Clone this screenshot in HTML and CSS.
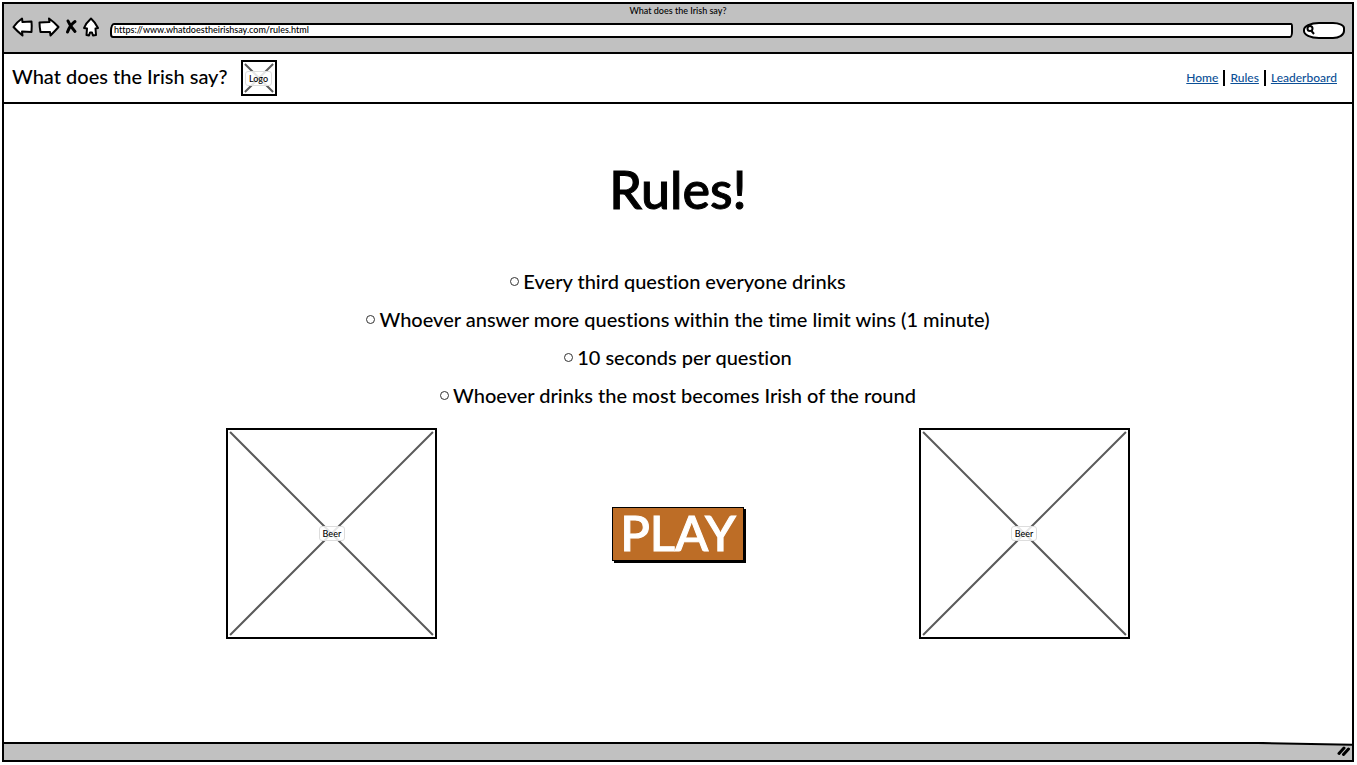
FILE: index.html
```html
<!DOCTYPE html>
<html lang="en">
<head>
<meta charset="utf-8">
<meta name="viewport" content="width=device-width, initial-scale=1">
<title>What does the Irish say?</title>
<link rel="stylesheet" href="styles.css">
</head>
<body>
<div class="window">
  <div class="chrome">
    <div class="chrome-title">What does the Irish say?</div>
    <div class="toolbar">
      <div class="tools">
        <button class="tool" type="button" aria-label="Back"><svg width="22" height="20" viewBox="0 0 22 20"><path d="M1.500 10Q5 5 10 1.500L10.500 5 19.500 4.500Q20 9 19.500 15L10 14.500 10.500 18.500Q5 14 1.500 10Z"/></svg></button>
        <button class="tool" type="button" aria-label="Forward"><svg width="22" height="20" viewBox="0 0 22 20"><path d="M1.500 5.500 11.500 5 11 1.500Q16 5 20.500 10 17 14 12.500 18.500L12 15 2.500 15Q1.500 10 1.500 5.500Z"/></svg></button>
        <button class="tool" type="button" aria-label="Stop"><svg width="14" height="20" viewBox="0 0 14 20"><path class="cross" d="M4 4Q6 9 11 14.500M11 4.500Q6 8 3.500 15"/></svg></button>
        <button class="tool" type="button" aria-label="Home page"><svg width="18" height="20" viewBox="0 0 18 20"><path d="M9 1.500Q13 5 16 11L13.500 11.500 14 18 11 18.500 10 15.500 8 15.500 7 18.500 4.500 18 5 11.500 2 11Q4 6 9 1.500Z"/></svg></button>
      </div>
      <input class="address" type="text" aria-label="Address" value="https://www.whatdoestheirishsay.com/rules.html">
      <div class="search">
        <svg width="9" height="10" viewBox="0 0 9 10"><circle cx="4" cy="3.500" r="2.500"/><path d="M5.500 6 8 9"/></svg>
        <input class="search-field" type="text" aria-label="Search">
      </div>
    </div>
  </div>

  <header class="site-header">
    <div class="brand">
      <span class="brand-name">What does the Irish say?</span>
      <div class="placeholder logo">
        <svg viewBox="0 0 100 100" preserveAspectRatio="none"><path d="M6 6 94 94M94 6 6 94"/></svg>
        <span class="placeholder-label">Logo</span>
      </div>
    </div>
    <nav class="site-nav">
      <a href="#">Home</a>
      <a href="#">Rules</a>
      <a href="#">Leaderboard</a>
    </nav>
  </header>

  <main class="content">
    <h1 class="heading">Rules!</h1>
    <ul class="rules">
      <li>Every third question everyone drinks</li>
      <li>Whoever answer more questions within the time limit wins (1 minute)</li>
      <li>10 seconds per question</li>
      <li>Whoever drinks the most becomes Irish of the round</li>
    </ul>
    <div class="play-row">
      <div class="placeholder beer">
        <svg viewBox="0 0 100 100" preserveAspectRatio="none"><path d="M1 1 99 99M99 1 1 99"/></svg>
        <span class="placeholder-label">Beer</span>
      </div>
      <button class="play" type="button">PLAY</button>
      <div class="placeholder beer">
        <svg viewBox="0 0 100 100" preserveAspectRatio="none"><path d="M1 1 99 99M99 1 1 99"/></svg>
        <span class="placeholder-label">Beer</span>
      </div>
    </div>
  </main>

  <footer class="status">
    <svg class="status-edge" viewBox="0 0 100 20" preserveAspectRatio="none"><path class="fill" d="M0 1 93 1 100 3V20H0Z"/><path class="line" d="M0 1 93 1 100 3"/></svg>
    <svg class="grip" width="13" height="10" viewBox="0 0 13 10"><path d="M2 7.500 7 2M6.500 8.500 11.500 3"/></svg>
  </footer>
</div>
</body>
</html>
```
FILE: styles.css
```css
*,
*::before {
  box-sizing: border-box;
}

body {
  margin: 0;
  padding: 2px 3px 3px 2px;
  min-height: 100vh;
  display: flex;
  background: #fff;
  color: #000;
  font-family: Lato, "Noto Sans", sans-serif;
  font-weight: 500;
  font-variant-ligatures: none;
}

button,
input {
  font: inherit;
  color: inherit;
}

.window {
  flex: 1;
  display: flex;
  flex-direction: column;
  border: 2px solid #000;
}

.chrome {
  height: 50px;
  background: #c1c1c1;
  border-bottom: 2px solid #000;
}

.chrome-title {
  font-size: 9px;
  line-height: 14px;
  text-align: center;
}

.toolbar {
  display: flex;
  align-items: center;
  gap: 8px;
  height: 18px;
  padding: 0 7px 0 8px;
}

.tools {
  display: flex;
  gap: 4px;
}

.tool {
  display: flex;
  padding: 0;
  border: 0;
  background: none;
}

.tool svg {
  fill: #fff;
  stroke: #000;
  stroke-width: 2;
  stroke-linejoin: round;
  stroke-linecap: round;
}

.tool .cross {
  fill: none;
  stroke-width: 3;
}

.address {
  flex: 1;
  min-width: 0;
  height: 15px;
  margin: 6px 0 0 2px;
  padding: 0 2px 2px;
  border: 2px solid #000;
  border-radius: 4px 2px 3px 3px / 8px 4px 6px 4px;
  background: #fff;
  font-size: 9px;
}

.search {
  display: flex;
  align-items: center;
  width: 42px;
  height: 17px;
  margin: 6px 0 0 2px;
  padding-left: 1px;
  border: 2px solid #000;
  border-radius: 16px 12px 12px 16px / 8px 6px 8px 8px;
  background: #fff;
}

.search svg {
  flex: none;
  fill: none;
  stroke: #000;
  stroke-width: 2;
}

.search-field {
  width: 100%;
  min-width: 0;
  height: 10px;
  padding: 0;
  border: 0;
  background: none;
  font-size: 9px;
}

.site-header {
  display: flex;
  align-items: center;
  justify-content: space-between;
  height: 50px;
  padding: 0 15px 0 8px;
  border-bottom: 2px solid #000;
}

.brand {
  display: flex;
  align-items: center;
  gap: 13px;
}

.brand-name {
  padding-bottom: 4px;
  font-size: 20px;
  line-height: 24px;
}

.placeholder {
  display: grid;
  place-items: center;
  border: 2px solid #000;
}

.placeholder > * {
  grid-area: 1 / 1;
}

.placeholder svg {
  width: 100%;
  height: 100%;
  stroke: #5a5a5a;
  stroke-width: 2;
}

.placeholder path {
  vector-effect: non-scaling-stroke;
}

.placeholder-label {
  padding: 0 3px;
  border: 1px solid #ddd;
  border-radius: 3px;
  background: rgba(255, 255, 255, 0.85);
  font-size: 9px;
  line-height: 13px;
  z-index: 1;
}

.logo {
  width: 36px;
  height: 36px;
}

.site-nav {
  display: flex;
  font-size: 12px;
  line-height: 16px;
}

.site-nav a {
  color: #0b4f96;
}

.site-nav a + a {
  margin-left: 5px;
  padding-left: 5px;
  border-left: 2px solid #000;
}

.content {
  flex: 1;
  padding-bottom: 24px;
}

.heading {
  margin: 53px 0 41px;
  font-size: 52px;
  font-weight: 500;
  line-height: 64px;
  text-align: center;
  -webkit-text-stroke: 1px #000;
}

.rules {
  margin: 0;
  padding: 0;
  list-style: none;
  font-size: 20px;
  line-height: 38px;
}

.rules li {
  display: flex;
  align-items: center;
  justify-content: center;
  gap: 4px;
}

.rules li::before {
  content: "";
  width: 9px;
  height: 9px;
  border: 1px solid #333;
  border-radius: 50%;
}

.play-row {
  display: flex;
  align-items: center;
  justify-content: space-between;
  margin-top: 14px;
  padding: 0 16.5%;
}

.beer {
  width: 211px;
  height: 211px;
}

.play {
  padding: 0 7px 4px;
  border: 1px solid #000;
  box-shadow: 2px 2px 0 #000;
  background: #bd6d26;
  color: #fff;
  font-size: 49px;
  line-height: 48px;
  -webkit-text-stroke: 1px #fff;
}

.status {
  display: flex;
  align-items: center;
  justify-content: flex-end;
  position: relative;
  height: 18px;
  padding-right: 2px;
}

.status-edge {
  position: absolute;
  inset: 0;
  width: 100%;
  height: 100%;
}

.status-edge .fill {
  fill: #c1c1c1;
}

.status-edge .line {
  fill: none;
  stroke: #000;
  stroke-width: 2;
  vector-effect: non-scaling-stroke;
}

.grip {
  position: relative;
  fill: none;
  stroke: #000;
  stroke-width: 3;
  stroke-linecap: round;
}
```
